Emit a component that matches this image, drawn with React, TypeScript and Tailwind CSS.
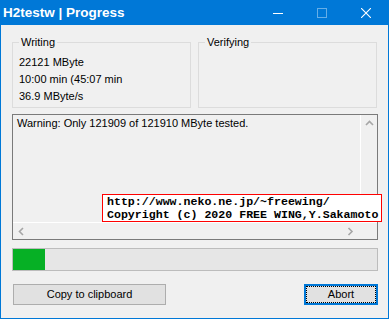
import React from "react";

const ui = "font-['Liberation_Sans',Arial,sans-serif]";

function Chevron({ dir }: { dir: "up" | "left" | "right" }) {
  const d =
    dir === "up"
      ? "M1 5 L4.5 1.5 L8 5"
      : dir === "left"
      ? "M5 1 L1.5 4.5 L5 8"
      : "M1.5 1 L5 4.5 L1.5 8";
  const w = dir === "up" ? 9 : 7;
  const h = dir === "up" ? 7 : 9;
  return (
    <svg width={w} height={h} viewBox={`0 0 ${w} ${h}`} fill="none">
      <path d={d} stroke="#a6a6a6" strokeWidth="1.6" />
    </svg>
  );
}

function GroupBox({ title, lines }: { title: string; lines: string[] }) {
  return (
    <fieldset className="w-[179px] h-[73px] border border-[#dcdcdc]">
      <legend className="ml-[6px] px-[2px] text-[11px] leading-[15px]">{title}</legend>
      <div className="pl-[6px] pt-[4px] text-[11px] leading-[17px]">
        {lines.map((l) => (
          <div key={l}>{l}</div>
        ))}
      </div>
    </fieldset>
  );
}

export default function App() {
  return (
    <div
      className={clsx(ui, "w-[389px] h-[319px] border border-[#0078d7] bg-[#f0f0f0] text-black flex flex-col")}
    >
      {/* title bar */}
      <div className="h-[24px] bg-[#0078d7] flex items-center text-white">
        <div className="pl-[2px] text-[13.5px] font-bold leading-none flex-1">H2testw | Progress</div>
        <div className="flex h-full">
          <div className="w-[44px] flex items-center justify-center">
            <div className="w-[10px] h-px bg-white" />
          </div>
          <div className="w-[44px] flex items-center justify-center">
            <div className="w-[10px] h-[10px] border border-[#66aee7]" />
          </div>
          <div className="w-[44px] flex items-center justify-center">
            <svg width="10" height="10" viewBox="0 0 10 10">
              <path d="M0 0 L10 10 M10 0 L0 10" stroke="white" strokeWidth="1.1" />
            </svg>
          </div>
        </div>
      </div>

      <div className="px-[11px] pt-[10px] flex flex-col">
        <div className="flex gap-[7px]">
          <GroupBox title="Writing" lines={["22121 MByte", "10:00 min (45:07 min", "36.9 MByte/s"]} />
          <GroupBox title="Verifying" lines={[]} />
        </div>

        {/* log box */}
        <div className="relative mt-[6px] w-[366px] h-[126px] border border-[#7a7a7a] flex flex-col">
          <div className="flex flex-1 min-h-0">
            <div className="flex-1 pl-[4px] pt-[1px] text-[11px] leading-[14px]">
              Warning: Only 121909 of 121910 MByte tested.
            </div>
            <div className="w-[17px] border-l border-white flex justify-center pt-[5px]">
              <Chevron dir="up" />
            </div>
          </div>
          <div className="h-[17px] flex border-t border-white">
            <div className="flex-1 flex items-center justify-between pl-[5px] pr-[6px]">
              <Chevron dir="left" />
              <Chevron dir="right" />
            </div>
            <div className="w-[17px]" />
          </div>

          <div className="absolute left-[89px] top-[79px] w-[280px] h-[28px] border border-[#ff0000] bg-white pl-[4px] font-['Liberation_Mono',monospace] font-bold text-[11.6px] leading-[13px] whitespace-nowrap">
            <div>http://www.neko.ne.jp/~freewing/</div>
            <div>Copyright (c) 2020 FREE WING,Y.Sakamoto</div>
          </div>
        </div>

        {/* progress */}
        <div className="mt-[8px] w-[366px] h-[23px] border border-[#bcbcbc] bg-[#e6e6e6]">
          <div className="w-[32px] h-full bg-[#06b025]" />
        </div>

        {/* buttons */}
        <div className="mt-[13px] w-[366px] pl-[1px] flex justify-between">
          <button className="w-[153px] h-[21px] border border-[#adadad] bg-[#e1e1e1] text-[11px] leading-none">
            Copy to clipboard
          </button>
          <button className="w-[74px] h-[21px] border-2 border-[#0078d7] bg-[#e1e1e1] p-0">
            <span className="flex items-center justify-center w-full h-full border border-dotted border-black text-[11px] leading-none">
              Abort
            </span>
          </button>
        </div>
      </div>
    </div>
  );
}

function clsx(...c: string[]) {
  return c.join(" ");
}
